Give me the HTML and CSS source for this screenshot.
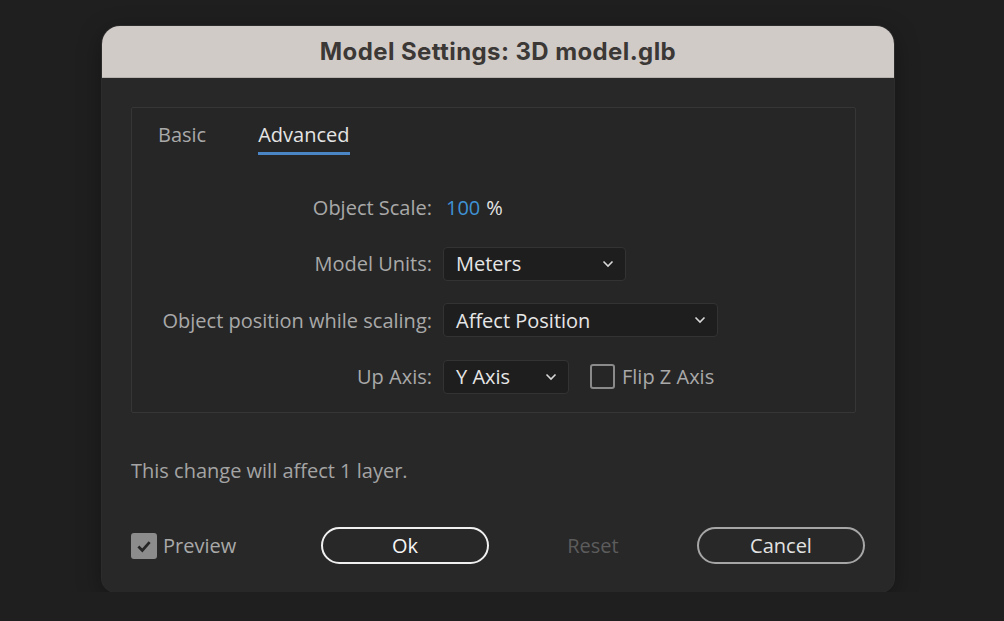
FILE: index.html
```html
<!DOCTYPE html>
<html lang="en">
<head>
  <meta charset="UTF-8" />
  <meta name="viewport" content="width=device-width, initial-scale=1.0"/>
  <title>Model Settings</title>
  <link rel="stylesheet" href="styles.css">
</head>
<body>

  <div class="dialog">
    <div class="title-bar">Model Settings: 3D model.glb</div>

    <div class="dialog-body">
      <div class="panel">
        <div class="tabs">
          <span class="tab">Basic</span>
          <span class="tab active">Advanced</span>
        </div>

        <div class="form">
          <div class="label">Object Scale:</div>
          <div class="control">
            <span class="scale-value">100</span>
            <span class="unit">%</span>
          </div>

          <div class="label">Model Units:</div>
          <div class="control">
            <div class="select units">
              <span>Meters</span>
              <svg class="chevron" viewBox="0 0 12 8"><path d="M1.5 1.5 L6 6 L10.5 1.5" /></svg>
            </div>
          </div>

          <div class="label">Object position while scaling:</div>
          <div class="control">
            <div class="select position">
              <span>Affect Position</span>
              <svg class="chevron" viewBox="0 0 12 8"><path d="M1.5 1.5 L6 6 L10.5 1.5" /></svg>
            </div>
          </div>

          <div class="label">Up Axis:</div>
          <div class="control">
            <div class="select axis">
              <span>Y Axis</span>
              <svg class="chevron" viewBox="0 0 12 8"><path d="M1.5 1.5 L6 6 L10.5 1.5" /></svg>
            </div>
            <label class="check">
              <span class="box"></span>
              <span>Flip Z Axis</span>
            </label>
          </div>
        </div>
      </div>

      <p class="note">This change will affect 1 layer.</p>

      <div class="footer">
        <label class="check preview">
          <span class="box checked">
            <svg viewBox="0 0 16 16"><path d="M3 8.5 L6.5 12 L13 4.5" /></svg>
          </span>
          <span>Preview</span>
        </label>
        <div class="buttons">
          <button class="btn primary">Ok</button>
          <button class="btn disabled">Reset</button>
          <button class="btn">Cancel</button>
        </div>
      </div>
    </div>
  </div>

</body>
</html>
```

FILE: styles.css
```css
* {
  box-sizing: border-box;
  margin: 0;
  padding: 0;
}

body {
  background: #1f1f1f;
  font-family: 'Open Sans', 'Noto Sans', sans-serif;
  font-size: 20px;
  color: #a9a9a9;
  padding: 26px 0 0 102px;
}

.dialog {
  width: 792px;
  height: 566px;
  background: #282828;
  border-radius: 18px 18px 14px 14px;
  box-shadow: 0 0 0 1px #2c2c2c, 0 6px 24px rgba(0,0,0,0.35);
  overflow: hidden;
}

.title-bar {
  height: 52px;
  background: #d1cbc8;
  color: #3b3836;
  font-family: Inter, 'Noto Sans', sans-serif;
  font-weight: 700;
  font-size: 24px;
  letter-spacing: 0.4px;
  display: flex;
  align-items: center;
  justify-content: center;
  border-bottom: 1px solid #b8b2af;
}

.dialog-body {
  padding: 29px 29px 0 29px;
}

.panel {
  width: 725px;
  height: 306px;
  border: 1px solid #363636;
  border-radius: 2px;
  background: #262626;
  padding: 15px 0 0 26px;
}

.tabs {
  display: flex;
  gap: 52px;
  line-height: 24px;
}

.tab {
  padding-bottom: 5px;
  border-bottom: 3px solid transparent;
  color: #a9a9a9;
}

.tab.active {
  color: #e4e4e4;
  border-bottom-color: #4a85c6;
}

.form {
  display: grid;
  grid-template-columns: 274px auto;
  grid-auto-rows: 34px;
  column-gap: 11px;
  row-gap: 22.5px;
  margin-top: 35px;
  align-items: center;
}

.label {
  text-align: right;
  color: #a9a9a9;
}

.control {
  display: flex;
  align-items: center;
  gap: 21px;
  height: 34px;
}

.scale-value {
  color: #3f92d4;
  margin-left: 3px;
}

.unit {
  color: #e4e4e4;
  margin-left: -15px;
}

.select {
  height: 34px;
  background: #1e1e1e;
  border: 1px solid #333;
  border-radius: 4px;
  display: flex;
  align-items: center;
  justify-content: space-between;
  padding: 0 11px 0 12px;
  color: #e6e6e6;
}

.select.units { width: 183px; }
.select.position { width: 275px; }
.select.axis { width: 126px; }

.chevron {
  width: 12px;
  height: 8px;
  fill: none;
  stroke: #d8d8d8;
  stroke-width: 1.6;
}

.check {
  display: flex;
  align-items: center;
  gap: 7px;
  color: #a9a9a9;
}

.box {
  width: 25px;
  height: 25px;
  border: 2px solid #8a8a8a;
  border-radius: 3px;
  display: flex;
  align-items: center;
  justify-content: center;
}

.box.checked {
  background: #8c8c8c;
  border-color: #8c8c8c;
  width: 26px;
  height: 26px;
}

.box svg {
  width: 18px;
  height: 18px;
  fill: none;
  stroke: #262626;
  stroke-width: 2.4;
}

.note {
  margin-top: 46px;
  line-height: 24px;
  color: #a4a4a4;
}

.footer {
  margin-top: 44px;
  display: flex;
  align-items: center;
  justify-content: space-between;
}

.preview {
  gap: 6px;
}

.buttons {
  display: flex;
  gap: 20px;
}

.btn {
  width: 168px;
  height: 37px;
  border-radius: 19px;
  border: 2px solid #a6a6a6;
  background: transparent;
  color: #e2e2e2;
  font-family: 'Open Sans', 'Noto Sans', sans-serif;
  font-size: 20px;
  cursor: pointer;
}

.btn.primary {
  border-color: #f0f0f0;
  color: #f4f4f4;
}

.btn.disabled {
  border-color: transparent;
  color: #5c5c5c;
  cursor: default;
}
```
